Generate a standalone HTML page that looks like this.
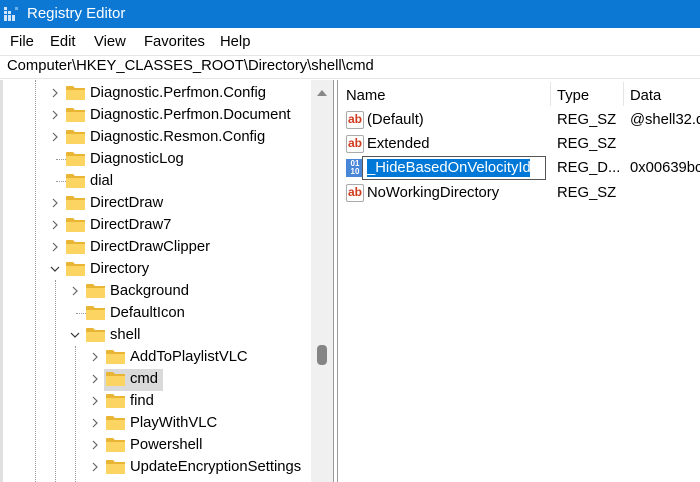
<!DOCTYPE html>
<html><head><style>
*{margin:0;padding:0;box-sizing:border-box}
body{width:700px;height:482px;overflow:hidden;background:#fff;font-family:"Liberation Sans",sans-serif;font-size:14.8px;color:#000;position:relative}
.a{position:absolute;white-space:nowrap}
.title{left:0;top:0;width:700px;height:28px;background:#0c78d4;color:#fff;font-size:15px}
.menu{top:34px}
.rrow{position:absolute;left:346px;height:22px;line-height:22px;white-space:nowrap}
.ab{position:absolute;left:0;top:2px;width:18px;height:18px;border:1px solid #aaa;border-radius:2px;background:#fff;color:#d03a1c;font-weight:bold;font-size:12px;line-height:15px;text-align:center}
</style></head><body>
<div class="a title">
<svg class="a" style="left:4px;top:7px" width="14" height="14"><g fill="#cfe6fa"><rect x="0" y="0" width="3" height="3"/><rect x="4" y="4" width="3" height="3"/><rect x="0" y="4" width="3" height="3"/><rect x="8" y="8" width="3" height="3"/><rect x="4" y="8" width="3" height="3"/><rect x="0" y="8" width="3" height="3"/><rect x="0" y="11" width="3" height="3"/><rect x="4" y="11" width="3" height="3"/><rect x="8" y="11" width="3" height="3"/><rect x="11" y="0" width="3" height="3" opacity=".5"/></g></svg>
<span class="a" style="left:27px;top:5px">Registry Editor</span></div>
<span class="a menu" style="left:10px">File</span>
<span class="a menu" style="left:50px">Edit</span>
<span class="a menu" style="left:94px">View</span>
<span class="a menu" style="left:144px">Favorites</span>
<span class="a menu" style="left:220px">Help</span>
<div class="a" style="left:0;top:55px;width:700px;height:24px;border-top:1px solid #e5e5e5;border-bottom:1px solid #e5e5e5"></div>
<span class="a" style="left:7px;top:58px">Computer\HKEY_CLASSES_ROOT\Directory\shell\cmd</span>
<div class="a" style="left:0;top:80px;width:3px;height:402px;background:#e0e0e0"></div>
<div class="a" style="left:311px;top:80px;width:22px;height:402px;background:#f0f0f0"></div>
<div class="a" style="left:333px;top:80px;width:1px;height:402px;background:#999"></div>
<div class="a" style="left:337px;top:80px;width:1px;height:402px;background:#999"></div>
<svg class="a" style="left:316px;top:89px" width="12" height="8"><path d="M1 7 L6 1 L11 7Z" fill="#888"/></svg>
<div class="a" style="left:317px;top:345px;width:10px;height:20px;background:#858585;border-radius:4px"></div>
<div class="a" style="left:35px;top:80px;border-left:1px dotted #999;height:402px"></div>
<div class="a" style="left:55px;top:280px;border-left:1px dotted #999;height:202px"></div>
<div class="a" style="left:75px;top:346px;border-left:1px dotted #999;height:136px"></div>
<div class="a" style="left:104px;top:369px;width:59px;height:22px;background:#dadada"></div>
<div id="tree"></div>
<script>
var rows=[[0,'Diagnostic.Perfmon.Config','>'],[0,'Diagnostic.Perfmon.Document','>'],[0,'Diagnostic.Resmon.Config','>'],[0,'DiagnosticLog',''],[0,'dial',''],[0,'DirectDraw','>'],[0,'DirectDraw7','>'],[0,'DirectDrawClipper','>'],[0,'Directory','v'],[1,'Background','>'],[1,'DefaultIcon',''],[1,'shell','v'],[2,'AddToPlaylistVLC','>'],[2,'cmd','>'],[2,'find','>'],[2,'PlayWithVLC','>'],[2,'Powershell','>'],[2,'UpdateEncryptionSettings','>']];
var h='';rows.forEach(function(r,i){var y=82+i*22,x=50+r[0]*20;
if(r[2]=='>')h+='<svg class="a" style="left:'+x+'px;top:'+(y+6)+'px" width="10" height="10"><path d="M3 1 L7 5 L3 9" stroke="#666" stroke-width="1.2" fill="none"/></svg>';
else if(r[2]=='v')h+='<svg class="a" style="left:'+x+'px;top:'+(y+6)+'px" width="10" height="10"><path d="M1 3 L5 7 L9 3" stroke="#333" stroke-width="1.2" fill="none"/></svg>';
else h+='<div class="a" style="left:'+(x+6)+'px;top:'+(y+11)+'px;width:10px;border-top:1px dotted #999"></div>';
h+='<svg class="a" style="left:'+(x+16)+'px;top:'+(y+3)+'px" width="20" height="16"><path d="M0 2 Q0 1 1 1 H7 L9 3 H19 V15 H0Z" fill="#e8b534"/><rect x="0" y="5" width="19" height="10" fill="#fcd462"/></svg>';
h+='<span class="a" style="left:'+(x+40)+'px;top:'+(y+3)+'px">'+r[1]+'</span>';});
document.getElementById('tree').innerHTML=h;
</script>
<span class="a" style="left:346px;top:88px">Name</span>
<div class="a" style="left:550px;top:82px;width:1px;height:24px;background:#e5e5e5"></div>
<span class="a" style="left:557px;top:88px">Type</span>
<div class="a" style="left:623px;top:82px;width:1px;height:24px;background:#e5e5e5"></div>
<span class="a" style="left:630px;top:88px">Data</span>
<div class="rrow" style="top:109px"><div class="ab">ab</div><span style="margin-left:21px">(Default)</span></div>
<div class="rrow" style="top:133px"><div class="ab">ab</div><span style="margin-left:21px">Extended</span></div>
<div class="rrow" style="top:182px"><div class="ab">ab</div><span style="margin-left:21px">NoWorkingDirectory</span></div>
<div class="a" style="left:346px;top:159px;width:18px;height:18px;background:#4a86d8;color:#fff;font-size:8px;line-height:8px;font-weight:bold;padding-top:1px;text-align:center">01<br>10</div>
<div class="a" style="left:362px;top:156px;width:184px;height:24px;border:1px solid #555;background:#fff"></div>
<div class="a" style="left:367px;top:159px;width:163px;height:18px;background:#0078d7;color:#fff;line-height:18px">_HideBasedOnVelocityId</div>
<span class="a" style="left:557px;top:112px">REG_SZ</span><span class="a" style="left:630px;top:112px">@shell32.d</span>
<span class="a" style="left:557px;top:136px">REG_SZ</span>
<span class="a" style="left:557px;top:160px">REG_D...</span><span class="a" style="left:630px;top:160px">0x00639bc</span>
<span class="a" style="left:557px;top:185px">REG_SZ</span>
</body></html>
